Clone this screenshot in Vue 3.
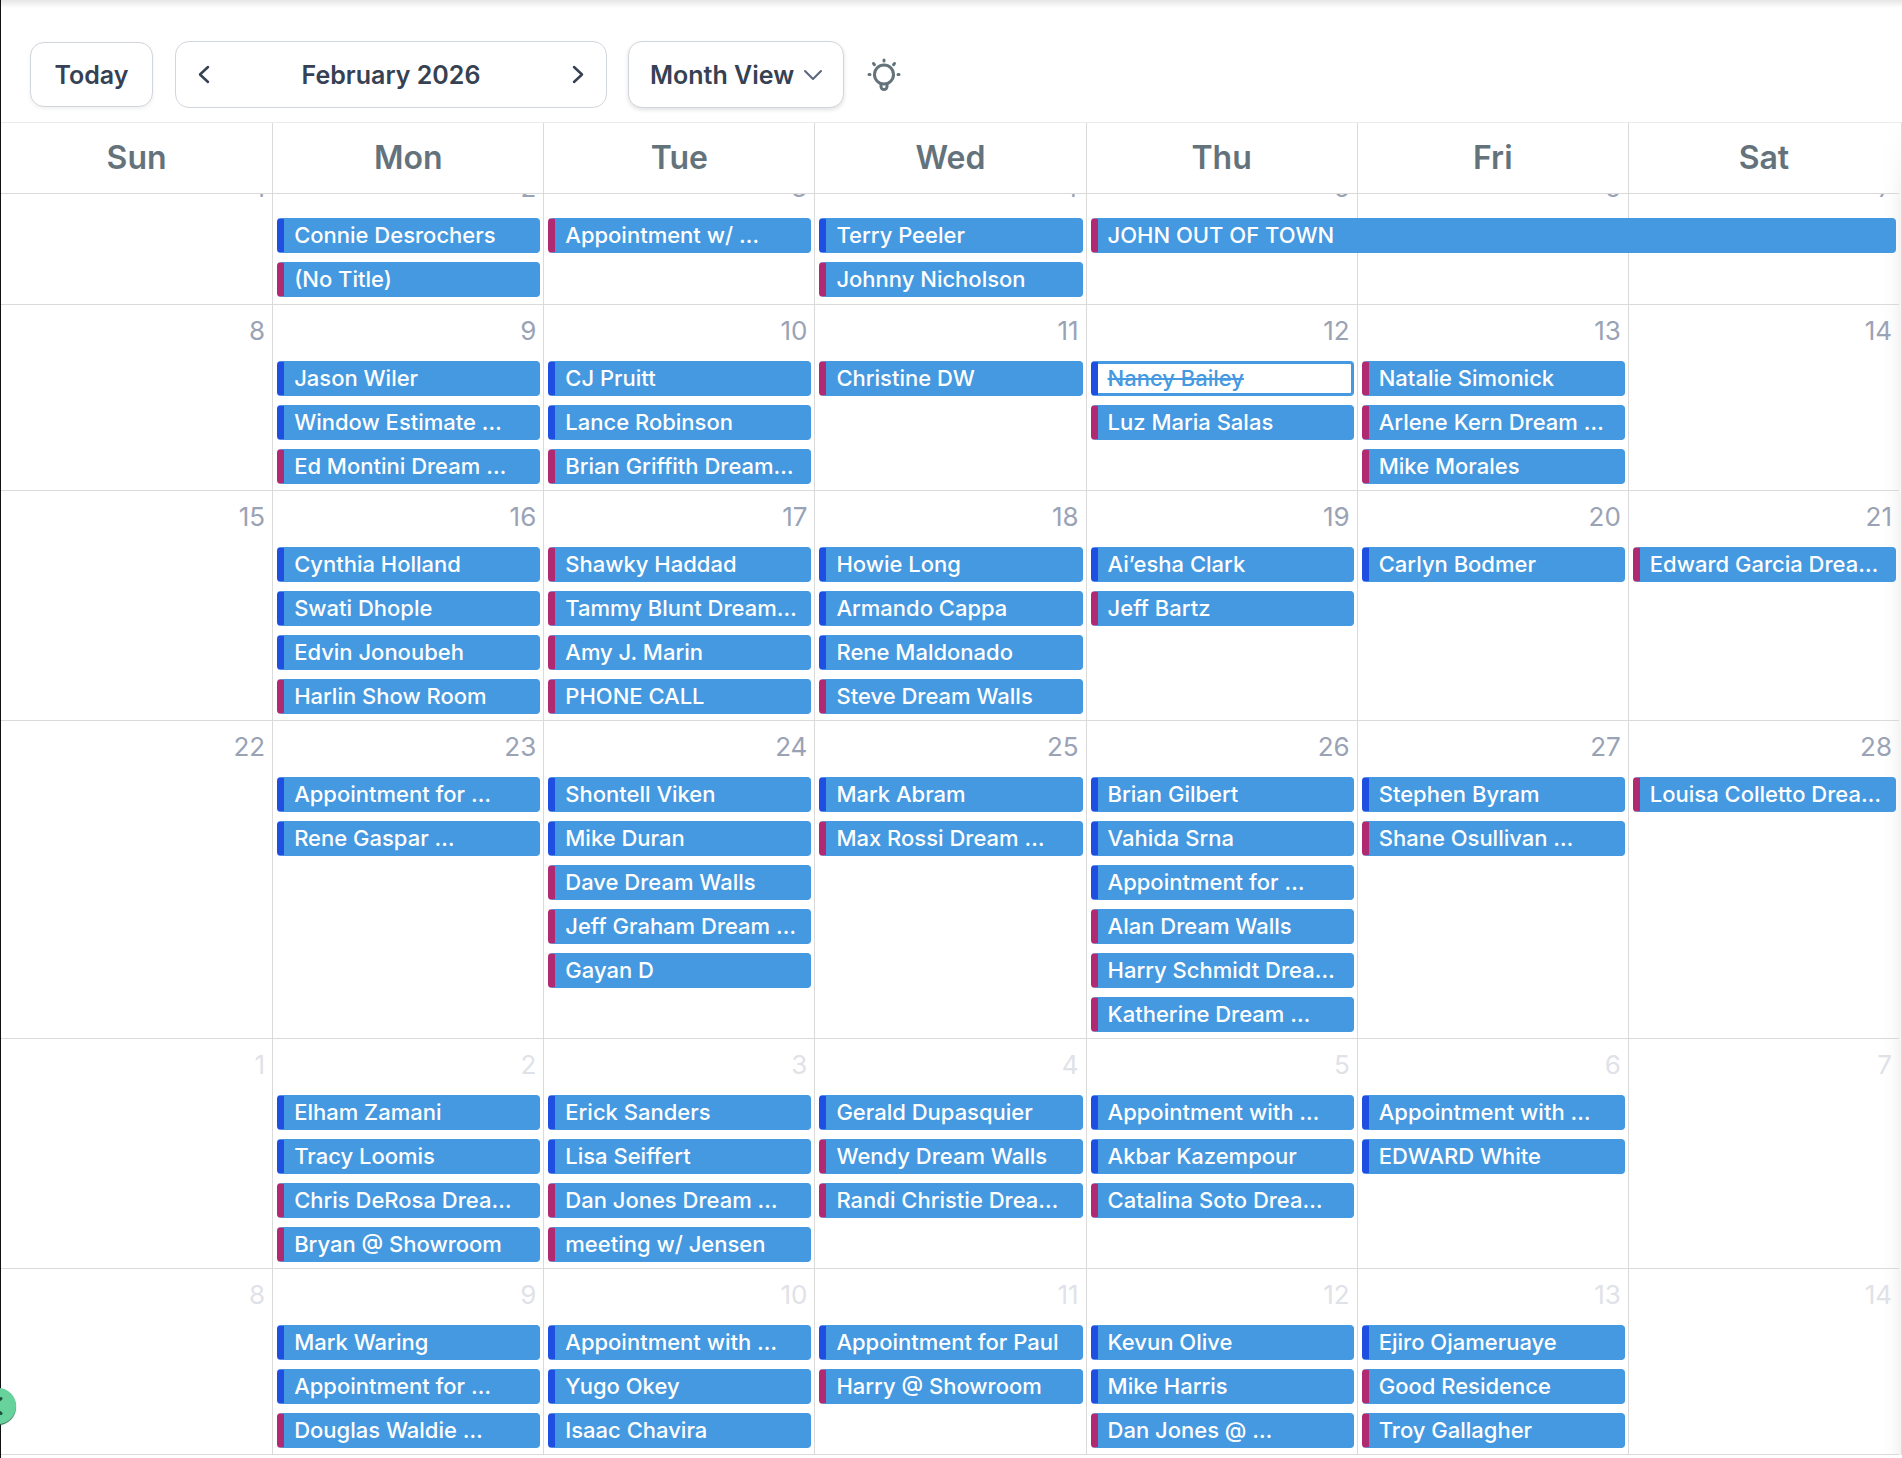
<script setup>
import { ref } from 'vue'

const days = ['Sun', 'Mon', 'Tue', 'Wed', 'Thu', 'Fri', 'Sat']
const view = ref('month')

// Event kinds: b = blue marker, p = pink marker, x = cancelled
const event = (entry) => {
  const [kind, title, span = 1] = entry
  return { kind, title, span }
}
const week = (start, other, cells) => ({
  other,
  days: cells.map((events, i) => ({ number: start + i, events: events.map(event) })),
})

const weeks = [
  week(1, false, [
    [],
    [['b', 'Connie Desrochers'], ['p', '(No Title)']],
    [['p', 'Appointment w/ …']],
    [['b', 'Terry Peeler'], ['p', 'Johnny Nicholson']],
    [['p', 'JOHN OUT OF TOWN', 3]],
    [],
    [],
  ]),
  week(8, false, [
    [],
    [['b', 'Jason Wiler'], ['b', 'Window Estimate …'], ['p', 'Ed Montini Dream …']],
    [['b', 'CJ Pruitt'], ['b', 'Lance Robinson'], ['p', 'Brian Griffith Dream…']],
    [['p', 'Christine DW']],
    [['x', 'Nancy Bailey'], ['p', 'Luz Maria Salas']],
    [['p', 'Natalie Simonick'], ['p', 'Arlene Kern Dream …'], ['p', 'Mike Morales']],
    [],
  ]),
  week(15, false, [
    [],
    [['b', 'Cynthia Holland'], ['b', 'Swati Dhople'], ['b', 'Edvin Jonoubeh'], ['p', 'Harlin Show Room']],
    [['p', 'Shawky Haddad'], ['p', 'Tammy Blunt Dream…'], ['p', 'Amy J. Marin'], ['p', 'PHONE CALL']],
    [['b', 'Howie Long'], ['b', 'Armando Cappa'], ['b', 'Rene Maldonado'], ['p', 'Steve Dream Walls']],
    [['b', 'Ai’esha Clark'], ['p', 'Jeff Bartz']],
    [['b', 'Carlyn Bodmer']],
    [['p', 'Edward Garcia Drea…']],
  ]),
  week(22, false, [
    [],
    [['b', 'Appointment for …'], ['b', 'Rene Gaspar …']],
    [['b', 'Shontell Viken'], ['b', 'Mike Duran'], ['p', 'Dave Dream Walls'], ['p', 'Jeff Graham Dream …'], ['p', 'Gayan D']],
    [['b', 'Mark Abram'], ['p', 'Max Rossi Dream …']],
    [['b', 'Brian Gilbert'], ['b', 'Vahida Srna'], ['b', 'Appointment for …'], ['p', 'Alan Dream Walls'], ['p', 'Harry Schmidt Drea…'], ['p', 'Katherine Dream …']],
    [['b', 'Stephen Byram'], ['p', 'Shane Osullivan …']],
    [['p', 'Louisa Colletto Drea…']],
  ]),
  week(1, true, [
    [],
    [['b', 'Elham Zamani'], ['b', 'Tracy Loomis'], ['p', 'Chris DeRosa Drea…'], ['p', 'Bryan @ Showroom']],
    [['b', 'Erick Sanders'], ['b', 'Lisa Seiffert'], ['p', 'Dan Jones Dream …'], ['p', 'meeting w/ Jensen']],
    [['b', 'Gerald Dupasquier'], ['p', 'Wendy Dream Walls'], ['p', 'Randi Christie Drea…']],
    [['b', 'Appointment with …'], ['b', 'Akbar Kazempour'], ['p', 'Catalina Soto Drea…']],
    [['b', 'Appointment with …'], ['b', 'EDWARD White']],
    [],
  ]),
  week(8, true, [
    [],
    [['b', 'Mark Waring'], ['b', 'Appointment for …'], ['p', 'Douglas Waldie …']],
    [['b', 'Appointment with …'], ['b', 'Yugo Okey'], ['b', 'Isaac Chavira']],
    [['b', 'Appointment for Paul'], ['p', 'Harry @ Showroom']],
    [['b', 'Kevun Olive'], ['b', 'Mike Harris'], ['p', 'Dan Jones @ …']],
    [['b', 'Ejiro Ojameruaye'], ['p', 'Good Residence'], ['p', 'Troy Gallagher']],
    [],
  ]),
]
</script>

<template>
  <main class="page">
    <header class="toolbar">
      <button class="box today" type="button">Today</button>
      <div class="box nav">
        <button class="arrow" type="button" aria-label="Previous month">
          <svg width="24" height="24" viewBox="0 0 24 24"><path d="m15 4-8 7.500 8 7.500" /></svg>
        </button>
        <h1 class="title">February 2026</h1>
        <button class="arrow" type="button" aria-label="Next month">
          <svg width="24" height="24" viewBox="0 0 24 24"><path d="m9 4 8 7.500L9 19" /></svg>
        </button>
      </div>
      <div class="view">
        <select v-model="view" class="box select" aria-label="Calendar view">
          <option value="month">Month View</option>
        </select>
        <svg class="chevron" width="20" height="12" viewBox="0 0 20 12"><path d="m2 2 8 8 8-8" /></svg>
      </div>
      <button class="tips" type="button" aria-label="Tips">
        <svg width="36" height="36" viewBox="0 0 36 36">
          <circle cx="18" cy="17.500" r="9.500" />
          <path d="M15 27v2.500a3 3 0 0 0 6 0V27M18 3v1M7.500 6.500l1 1.200M28.500 6.500l-1 1.200M3 17.500h1M32 17.500h1" />
        </svg>
      </button>
    </header>

    <div class="calendar">
      <table class="grid">
        <thead>
          <tr>
            <th v-for="day in days" :key="day" scope="col">{{ day }}</th>
          </tr>
        </thead>
        <tbody>
          <tr v-for="(row, r) in weeks" :key="r" :class="{ other: row.other }">
            <td v-for="day in row.days" :key="day.number">
              <div class="clip">
                <div class="day">
                  <span class="number">{{ day.number }}</span>
                  <a
                    v-for="(item, e) in day.events"
                    :key="e"
                    href="#"
                    class="event"
                    :class="[item.kind, { wide: item.span > 1 }]"
                  >{{ item.title }}</a>
                </div>
              </div>
            </td>
          </tr>
        </tbody>
      </table>
    </div>

    <button class="bubble" type="button" aria-label="Open panel">
      <svg width="36" height="36" viewBox="0 0 36 36"><path d="M21 10.500 12 18l9 7.500" /></svg>
    </button>
  </main>
</template>

<style>
body {
  background: #fff;
  overflow: hidden;
}
</style>

<style scoped>
.page {
  position: relative;
  box-sizing: border-box;
  min-height: 100vh;
  border-left: 1px solid #111;
  font-family: Inter, sans-serif;
  background: #fff linear-gradient(#e6e6e6, #fff) top / 100% 8px no-repeat;
}

.toolbar {
  box-sizing: border-box;
  display: flex;
  align-items: center;
  height: 122px;
  padding: 27px 29px 0;
}

.box {
  box-sizing: border-box;
  border: 1px solid #d1d5dc;
  border-radius: 14px;
  background: #fff;
  color: #364153;
  font: 600 25px/32px Inter, sans-serif;
}

.today {
  width: 123px;
  height: 65px;
  padding: 0;
  box-shadow: 0 2px 4px rgba(0, 0, 0, 0.06);
}

.nav {
  display: flex;
  align-items: center;
  justify-content: space-between;
  width: 432px;
  height: 67px;
  margin-left: 22px;
  padding: 0 17px;
}

.title {
  margin: 0;
  font: inherit;
}

.arrow,
.tips,
.bubble {
  display: flex;
  padding: 0;
  border: 0;
  background: none;
}

svg {
  fill: none;
  stroke: #364153;
  stroke-width: 2.5;
  stroke-linecap: round;
  stroke-linejoin: round;
}

.view {
  position: relative;
  margin-left: 21px;
}

.select {
  display: block;
  appearance: none;
  width: 216px;
  height: 67px;
  padding: 0 21px;
  box-shadow: 0 2px 4px rgba(0, 0, 0, 0.12);
}

.chevron {
  position: absolute;
  top: 28px;
  right: 21px;
  stroke: #5b667c;
  stroke-width: 2;
  pointer-events: none;
}

.tips {
  margin-left: 22px;
}

.tips svg {
  stroke: #64737b;
  stroke-width: 3;
}

.calendar {
  box-sizing: border-box;
  padding-right: 2px;
  border-top: 1px solid #ebebeb;
  border-right: 1px solid #dadada;
  background:
    linear-gradient(#fff, transparent) right top / 20px 80px no-repeat,
    linear-gradient(to left, #f3f3f3, #fbfbfb 40%, #fff) right / 20px 100% no-repeat;
}

.grid {
  width: 100%;
  table-layout: fixed;
  border-collapse: separate;
  border-spacing: 0;
  border-bottom: 1px solid #dadada;
}

th {
  height: 70px;
  padding: 0;
  color: #64737b;
  font-size: 32px;
  font-weight: 600;
  line-height: 40px;
}

td {
  padding: 0;
  border-top: 1px solid #dadada;
  vertical-align: top;
}

th + th,
td + td {
  border-left: 1px solid #dadada;
}

.day {
  display: flex;
  flex-direction: column;
  gap: 9px;
  padding: 10px 3px 6px 4px;
}

/* The first week is scrolled partly under the weekday header */
tbody tr:first-child .clip {
  display: flow-root;
  overflow-x: visible;
  overflow-y: clip;
}

tbody tr:first-child .day {
  margin-top: -32px;
  padding-bottom: 7px;
}

.number {
  padding: 0 4px 5px;
  color: #9aa3b5;
  font-size: 26px;
  line-height: 32px;
  text-align: right;
}

.other .number {
  color: #dfe2e8;
}

.event {
  box-sizing: border-box;
  height: 35px;
  padding: 0 10px;
  overflow: hidden;
  border: 1px solid #4599e0;
  border-left: 7px solid #1f4fe0;
  border-radius: 4px;
  background: #4599e0;
  color: #fff;
  font-size: 22px;
  font-weight: 550;
  line-height: 33px;
  text-decoration: none;
  white-space: nowrap;
}

.event.p {
  border-left-color: #b02a72;
}

.event.x {
  background: #fff;
  box-shadow: inset 0 2px #4599e0, inset 0 -2px #4599e0, inset -2px 0 #4599e0;
  color: #4599e0;
  text-decoration: line-through;
}

.event.wide {
  position: relative;
  z-index: 1;
  width: calc(300% + 16px);
}

.bubble {
  position: absolute;
  left: -21px;
  bottom: 34px;
  border-radius: 50%;
  background: #68d29c;
  box-shadow: 0 1px 1px #2c6b4b;
}

.bubble svg {
  stroke: #1f5138;
  stroke-width: 3;
}
</style>
